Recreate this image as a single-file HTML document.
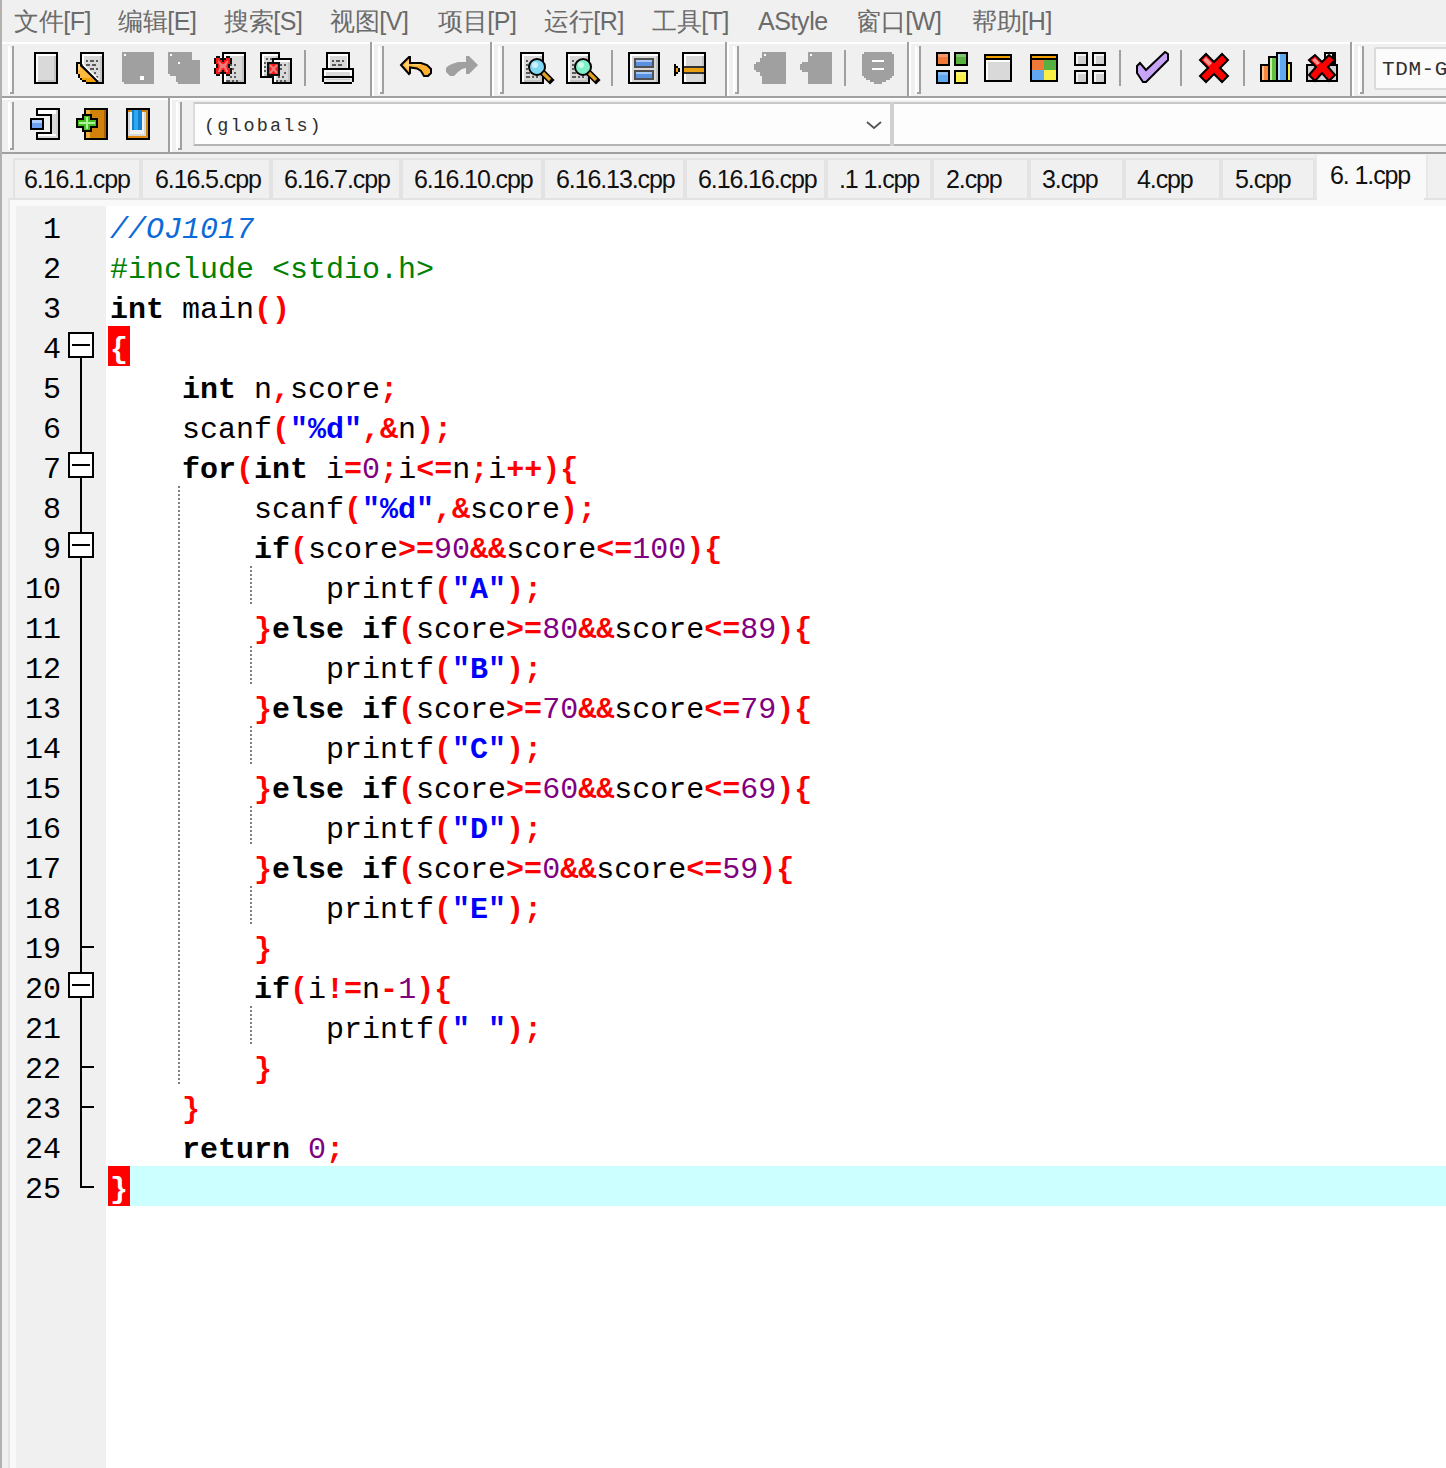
<!DOCTYPE html><html><head><meta charset="utf-8"><style>
*{margin:0;padding:0}
html,body{width:1446px;height:1468px;overflow:hidden;background:#f0f0f0;position:relative}
body{font-family:"Liberation Sans",sans-serif}
.menu{position:absolute;top:6px;font-size:25px;letter-spacing:-0.4px;line-height:30px;color:#6b6b6b;white-space:pre}
.courier{position:absolute;font-family:"Liberation Mono",monospace;font-size:21px;line-height:24px;color:#303030;white-space:pre}
.tab{position:absolute;font-size:25px;letter-spacing:-1.1px;line-height:30px;color:#111;white-space:pre}
.ln{position:absolute;left:16px;width:45px;text-align:right;font-family:"Liberation Mono",monospace;font-size:30px;line-height:40px;height:40px;color:#000;padding-top:4px;box-sizing:border-box}
.cl{position:absolute;left:110px;font-family:"Liberation Mono",monospace;font-size:30px;line-height:40px;height:40px;color:#000;white-space:pre;padding-top:4px;box-sizing:border-box}
.cl b{font-weight:bold}
.sy{color:#ff0000}
.nu{color:#800080}
.st{color:#0000ff}
.cm{color:#0a6ad8;font-style:italic}
.pp{color:#008000}
.wb{color:#fff}
</style></head><body><div style="position:absolute;left:0px;top:0px;width:2px;height:1468px;background:#b3b0ae;"></div><div class="menu" style="left:14px">文件[F]</div><div class="menu" style="left:118px">编辑[E]</div><div class="menu" style="left:224px">搜索[S]</div><div class="menu" style="left:330px">视图[V]</div><div class="menu" style="left:438px">项目[P]</div><div class="menu" style="left:544px">运行[R]</div><div class="menu" style="left:652px">工具[T]</div><div class="menu" style="left:758px">AStyle</div><div class="menu" style="left:856px">窗口[W]</div><div class="menu" style="left:972px">帮助[H]</div><div style="position:absolute;left:2px;top:42px;width:1444px;height:2px;background:#ffffff;"></div><div style="position:absolute;left:2px;top:96px;width:1444px;height:2px;background:#a0a0a0;"></div><div style="position:absolute;left:2px;top:98px;width:1444px;height:2px;background:#ffffff;"></div><div style="position:absolute;left:2px;top:152px;width:1444px;height:2px;background:#a0a0a0;"></div><div style="position:absolute;left:370px;top:42px;width:2px;height:54px;background:#a0a0a0;"></div><div style="position:absolute;left:372px;top:44px;width:2px;height:52px;background:#ffffff;"></div><div style="position:absolute;left:490px;top:42px;width:2px;height:54px;background:#a0a0a0;"></div><div style="position:absolute;left:492px;top:44px;width:2px;height:52px;background:#ffffff;"></div><div style="position:absolute;left:725px;top:42px;width:2px;height:54px;background:#a0a0a0;"></div><div style="position:absolute;left:727px;top:44px;width:2px;height:52px;background:#ffffff;"></div><div style="position:absolute;left:907px;top:42px;width:2px;height:54px;background:#a0a0a0;"></div><div style="position:absolute;left:909px;top:44px;width:2px;height:52px;background:#ffffff;"></div><div style="position:absolute;left:1350px;top:42px;width:2px;height:54px;background:#a0a0a0;"></div><div style="position:absolute;left:1352px;top:44px;width:2px;height:52px;background:#ffffff;"></div><div style="position:absolute;left:378px;top:46px;width:2px;height:48px;background:#ffffff;"></div><div style="position:absolute;left:380px;top:48px;width:2px;height:44px;background:#f8f8f8;"></div><div style="position:absolute;left:382px;top:46px;width:2px;height:48px;background:#a0a0a0;"></div><div style="position:absolute;left:380px;top:92px;width:2px;height:2px;background:#a0a0a0;"></div><div style="position:absolute;left:498px;top:46px;width:2px;height:48px;background:#ffffff;"></div><div style="position:absolute;left:500px;top:48px;width:2px;height:44px;background:#f8f8f8;"></div><div style="position:absolute;left:502px;top:46px;width:2px;height:48px;background:#a0a0a0;"></div><div style="position:absolute;left:500px;top:92px;width:2px;height:2px;background:#a0a0a0;"></div><div style="position:absolute;left:733px;top:46px;width:2px;height:48px;background:#ffffff;"></div><div style="position:absolute;left:735px;top:48px;width:2px;height:44px;background:#f8f8f8;"></div><div style="position:absolute;left:737px;top:46px;width:2px;height:48px;background:#a0a0a0;"></div><div style="position:absolute;left:735px;top:92px;width:2px;height:2px;background:#a0a0a0;"></div><div style="position:absolute;left:915px;top:46px;width:2px;height:48px;background:#ffffff;"></div><div style="position:absolute;left:917px;top:48px;width:2px;height:44px;background:#f8f8f8;"></div><div style="position:absolute;left:919px;top:46px;width:2px;height:48px;background:#a0a0a0;"></div><div style="position:absolute;left:917px;top:92px;width:2px;height:2px;background:#a0a0a0;"></div><div style="position:absolute;left:1358px;top:46px;width:2px;height:48px;background:#ffffff;"></div><div style="position:absolute;left:1360px;top:48px;width:2px;height:44px;background:#f8f8f8;"></div><div style="position:absolute;left:1362px;top:46px;width:2px;height:48px;background:#a0a0a0;"></div><div style="position:absolute;left:1360px;top:92px;width:2px;height:2px;background:#a0a0a0;"></div><div style="position:absolute;left:8px;top:46px;width:2px;height:48px;background:#ffffff;"></div><div style="position:absolute;left:10px;top:48px;width:2px;height:44px;background:#f8f8f8;"></div><div style="position:absolute;left:12px;top:46px;width:2px;height:48px;background:#a0a0a0;"></div><div style="position:absolute;left:10px;top:92px;width:2px;height:2px;background:#a0a0a0;"></div><div style="position:absolute;left:168px;top:98px;width:2px;height:54px;background:#a0a0a0;"></div><div style="position:absolute;left:170px;top:100px;width:2px;height:52px;background:#ffffff;"></div><div style="position:absolute;left:8px;top:102px;width:2px;height:48px;background:#ffffff;"></div><div style="position:absolute;left:10px;top:104px;width:2px;height:44px;background:#f8f8f8;"></div><div style="position:absolute;left:12px;top:102px;width:2px;height:48px;background:#a0a0a0;"></div><div style="position:absolute;left:10px;top:148px;width:2px;height:2px;background:#a0a0a0;"></div><div style="position:absolute;left:176px;top:102px;width:2px;height:48px;background:#ffffff;"></div><div style="position:absolute;left:178px;top:104px;width:2px;height:44px;background:#f8f8f8;"></div><div style="position:absolute;left:180px;top:102px;width:2px;height:48px;background:#a0a0a0;"></div><div style="position:absolute;left:178px;top:148px;width:2px;height:2px;background:#a0a0a0;"></div><div style="position:absolute;left:304px;top:50px;width:2px;height:36px;background:#a0a0a0;"></div><div style="position:absolute;left:611px;top:50px;width:2px;height:36px;background:#a0a0a0;"></div><div style="position:absolute;left:844px;top:50px;width:2px;height:36px;background:#a0a0a0;"></div><div style="position:absolute;left:1119px;top:50px;width:2px;height:36px;background:#a0a0a0;"></div><div style="position:absolute;left:1180px;top:50px;width:2px;height:36px;background:#a0a0a0;"></div><div style="position:absolute;left:1243px;top:50px;width:2px;height:36px;background:#a0a0a0;"></div><div style="position:absolute;left:1374px;top:47px;width:80px;height:43px;background:#fbfbfb;border:2px solid #dadada;border-radius:2px;box-sizing:border-box"></div><div class="courier" style="left:1382px;top:58px;font-size:21px;letter-spacing:0.6px">TDM-GCC</div><div style="position:absolute;left:193px;top:102px;width:699px;height:44px;background:#fdfdfd;border-top:2px solid #c8c8c8;border-bottom:2px solid #b4b4b4;border-left:2px solid #dcdcdc;box-sizing:border-box"></div><div style="position:absolute;left:890px;top:102px;width:4px;height:44px;background:#d0d0d0;"></div><div style="position:absolute;left:894px;top:102px;width:560px;height:44px;background:#fdfdfd;border-top:2px solid #c8c8c8;border-bottom:2px solid #b4b4b4;box-sizing:border-box"></div><div class="courier" style="left:204px;top:115px;font-size:18.5px;letter-spacing:2.1px">(globals)</div><svg style="position:absolute;left:864px;top:118px" width="20" height="14" viewBox="0 0 20 14"><path d="M3 4 L10 10 L17 4" fill="none" stroke="#555" stroke-width="1.8"/></svg><div style="position:absolute;left:2px;top:154px;width:1444px;height:46px;background:#f0f0f0;"></div><div style="position:absolute;left:13px;top:158px;width:128px;height:42px;background:#f0f0f0;border:2px solid #e3e3e3;box-sizing:border-box"></div><div class="tab" style="left:24px;top:164px">6.16.1.cpp</div><div style="position:absolute;left:141px;top:158px;width:130px;height:42px;background:#f0f0f0;border:2px solid #e3e3e3;box-sizing:border-box"></div><div class="tab" style="left:155px;top:164px">6.16.5.cpp</div><div style="position:absolute;left:271px;top:158px;width:130px;height:42px;background:#f0f0f0;border:2px solid #e3e3e3;box-sizing:border-box"></div><div class="tab" style="left:284px;top:164px">6.16.7.cpp</div><div style="position:absolute;left:401px;top:158px;width:142px;height:42px;background:#f0f0f0;border:2px solid #e3e3e3;box-sizing:border-box"></div><div class="tab" style="left:414px;top:164px">6.16.10.cpp</div><div style="position:absolute;left:543px;top:158px;width:142px;height:42px;background:#f0f0f0;border:2px solid #e3e3e3;box-sizing:border-box"></div><div class="tab" style="left:556px;top:164px">6.16.13.cpp</div><div style="position:absolute;left:685px;top:158px;width:141px;height:42px;background:#f0f0f0;border:2px solid #e3e3e3;box-sizing:border-box"></div><div class="tab" style="left:698px;top:164px">6.16.16.cpp</div><div style="position:absolute;left:826px;top:158px;width:106px;height:42px;background:#f0f0f0;border:2px solid #e3e3e3;box-sizing:border-box"></div><div class="tab" style="left:839px;top:164px">.1 1.cpp</div><div style="position:absolute;left:932px;top:158px;width:97px;height:42px;background:#f0f0f0;border:2px solid #e3e3e3;box-sizing:border-box"></div><div class="tab" style="left:946px;top:164px">2.cpp</div><div style="position:absolute;left:1029px;top:158px;width:95px;height:42px;background:#f0f0f0;border:2px solid #e3e3e3;box-sizing:border-box"></div><div class="tab" style="left:1042px;top:164px">3.cpp</div><div style="position:absolute;left:1124px;top:158px;width:97px;height:42px;background:#f0f0f0;border:2px solid #e3e3e3;box-sizing:border-box"></div><div class="tab" style="left:1137px;top:164px">4.cpp</div><div style="position:absolute;left:1221px;top:158px;width:94px;height:42px;background:#f0f0f0;border:2px solid #e3e3e3;box-sizing:border-box"></div><div class="tab" style="left:1235px;top:164px">5.cpp</div><div style="position:absolute;left:1315px;top:155px;width:113px;height:51px;background:#f9f9f9;border:2px solid #e8e8e8;border-bottom:none;border-top:none;box-sizing:border-box"></div><div class="tab" style="left:1330px;top:160px">6. 1.cpp</div><div style="position:absolute;left:8px;top:198px;width:1438px;height:1270px;background:#e3e3e3;"></div><div style="position:absolute;left:10px;top:200px;width:1436px;height:1268px;background:#f9f9f9;"></div><div style="position:absolute;left:1317px;top:198px;width:107px;height:8px;background:#f9f9f9;"></div><div style="position:absolute;left:16px;top:206px;width:90px;height:1262px;background:#f0f0f0;"></div><div style="position:absolute;left:106px;top:206px;width:1340px;height:1262px;background:#ffffff;"></div><div style="position:absolute;left:106px;top:1166px;width:1340px;height:40px;background:#ccffff;"></div><div style="position:absolute;left:108px;top:326px;width:22px;height:40px;background:#ff0000;"></div><div style="position:absolute;left:108px;top:1166px;width:22px;height:40px;background:#ff0000;"></div><div style="position:absolute;left:178px;top:486px;width:2px;height:600px;background:repeating-linear-gradient(#808080 0 2px, transparent 2px 4px)"></div><div style="position:absolute;left:250px;top:566px;width:2px;height:40px;background:repeating-linear-gradient(#808080 0 2px, transparent 2px 4px)"></div><div style="position:absolute;left:250px;top:646px;width:2px;height:40px;background:repeating-linear-gradient(#808080 0 2px, transparent 2px 4px)"></div><div style="position:absolute;left:250px;top:726px;width:2px;height:40px;background:repeating-linear-gradient(#808080 0 2px, transparent 2px 4px)"></div><div style="position:absolute;left:250px;top:806px;width:2px;height:40px;background:repeating-linear-gradient(#808080 0 2px, transparent 2px 4px)"></div><div style="position:absolute;left:250px;top:886px;width:2px;height:40px;background:repeating-linear-gradient(#808080 0 2px, transparent 2px 4px)"></div><div style="position:absolute;left:250px;top:1006px;width:2px;height:40px;background:repeating-linear-gradient(#808080 0 2px, transparent 2px 4px)"></div><div style="position:absolute;left:80px;top:358px;width:2px;height:830px;background:#000;"></div><div style="position:absolute;left:68px;top:332px;width:26px;height:26px;border:2px solid #000;background:#fff;box-sizing:border-box"></div><div style="position:absolute;left:72px;top:344px;width:18px;height:2px;background:#000;"></div><div style="position:absolute;left:68px;top:452px;width:26px;height:26px;border:2px solid #000;background:#fff;box-sizing:border-box"></div><div style="position:absolute;left:72px;top:464px;width:18px;height:2px;background:#000;"></div><div style="position:absolute;left:68px;top:532px;width:26px;height:26px;border:2px solid #000;background:#fff;box-sizing:border-box"></div><div style="position:absolute;left:72px;top:544px;width:18px;height:2px;background:#000;"></div><div style="position:absolute;left:68px;top:972px;width:26px;height:26px;border:2px solid #000;background:#fff;box-sizing:border-box"></div><div style="position:absolute;left:72px;top:984px;width:18px;height:2px;background:#000;"></div><div style="position:absolute;left:80px;top:946px;width:14px;height:2px;background:#000;"></div><div style="position:absolute;left:80px;top:1066px;width:14px;height:2px;background:#000;"></div><div style="position:absolute;left:80px;top:1106px;width:14px;height:2px;background:#000;"></div><div style="position:absolute;left:80px;top:1186px;width:14px;height:2px;background:#000;"></div><div class="ln" style="top:206px">1</div><div class="ln" style="top:246px">2</div><div class="ln" style="top:286px">3</div><div class="ln" style="top:326px">4</div><div class="ln" style="top:366px">5</div><div class="ln" style="top:406px">6</div><div class="ln" style="top:446px">7</div><div class="ln" style="top:486px">8</div><div class="ln" style="top:526px">9</div><div class="ln" style="top:566px">10</div><div class="ln" style="top:606px">11</div><div class="ln" style="top:646px">12</div><div class="ln" style="top:686px">13</div><div class="ln" style="top:726px">14</div><div class="ln" style="top:766px">15</div><div class="ln" style="top:806px">16</div><div class="ln" style="top:846px">17</div><div class="ln" style="top:886px">18</div><div class="ln" style="top:926px">19</div><div class="ln" style="top:966px">20</div><div class="ln" style="top:1006px">21</div><div class="ln" style="top:1046px">22</div><div class="ln" style="top:1086px">23</div><div class="ln" style="top:1126px">24</div><div class="ln" style="top:1166px">25</div><div class="cl" style="top:206px"><i class="cm">//OJ1017</i></div><div class="cl" style="top:246px"><span class="pp">#include &lt;stdio.h&gt;</span></div><div class="cl" style="top:286px"><b>int</b> main<b class="sy">()</b></div><div class="cl" style="top:326px"><b class="wb">{</b></div><div class="cl" style="top:366px">    <b>int</b> n<b class="sy">,</b>score<b class="sy">;</b></div><div class="cl" style="top:406px">    scanf<b class="sy">(</b><b class="st">&quot;%d&quot;</b><b class="sy">,&amp;</b>n<b class="sy">);</b></div><div class="cl" style="top:446px">    <b>for</b><b class="sy">(</b><b>int</b> i<b class="sy">=</b><span class="nu">0</span><b class="sy">;</b>i<b class="sy">&lt;=</b>n<b class="sy">;</b>i<b class="sy">++){</b></div><div class="cl" style="top:486px">        scanf<b class="sy">(</b><b class="st">&quot;%d&quot;</b><b class="sy">,&amp;</b>score<b class="sy">);</b></div><div class="cl" style="top:526px">        <b>if</b><b class="sy">(</b>score<b class="sy">&gt;=</b><span class="nu">90</span><b class="sy">&amp;&amp;</b>score<b class="sy">&lt;=</b><span class="nu">100</span><b class="sy">){</b></div><div class="cl" style="top:566px">            printf<b class="sy">(</b><b class="st">&quot;A&quot;</b><b class="sy">);</b></div><div class="cl" style="top:606px">        <b class="sy">}</b><b>else if</b><b class="sy">(</b>score<b class="sy">&gt;=</b><span class="nu">80</span><b class="sy">&amp;&amp;</b>score<b class="sy">&lt;=</b><span class="nu">89</span><b class="sy">){</b></div><div class="cl" style="top:646px">            printf<b class="sy">(</b><b class="st">&quot;B&quot;</b><b class="sy">);</b></div><div class="cl" style="top:686px">        <b class="sy">}</b><b>else if</b><b class="sy">(</b>score<b class="sy">&gt;=</b><span class="nu">70</span><b class="sy">&amp;&amp;</b>score<b class="sy">&lt;=</b><span class="nu">79</span><b class="sy">){</b></div><div class="cl" style="top:726px">            printf<b class="sy">(</b><b class="st">&quot;C&quot;</b><b class="sy">);</b></div><div class="cl" style="top:766px">        <b class="sy">}</b><b>else if</b><b class="sy">(</b>score<b class="sy">&gt;=</b><span class="nu">60</span><b class="sy">&amp;&amp;</b>score<b class="sy">&lt;=</b><span class="nu">69</span><b class="sy">){</b></div><div class="cl" style="top:806px">            printf<b class="sy">(</b><b class="st">&quot;D&quot;</b><b class="sy">);</b></div><div class="cl" style="top:846px">        <b class="sy">}</b><b>else if</b><b class="sy">(</b>score<b class="sy">&gt;=</b><span class="nu">0</span><b class="sy">&amp;&amp;</b>score<b class="sy">&lt;=</b><span class="nu">59</span><b class="sy">){</b></div><div class="cl" style="top:886px">            printf<b class="sy">(</b><b class="st">&quot;E&quot;</b><b class="sy">);</b></div><div class="cl" style="top:926px">        <b class="sy">}</b></div><div class="cl" style="top:966px">        <b>if</b><b class="sy">(</b>i<b class="sy">!=</b>n<b class="sy">-</b><span class="nu">1</span><b class="sy">){</b></div><div class="cl" style="top:1006px">            printf<b class="sy">(</b><b class="st">&quot; &quot;</b><b class="sy">);</b></div><div class="cl" style="top:1046px">        <b class="sy">}</b></div><div class="cl" style="top:1086px">    <b class="sy">}</b></div><div class="cl" style="top:1126px">    <b>return</b> <span class="nu">0</span><b class="sy">;</b></div><div class="cl" style="top:1166px"><b class="wb">}</b></div><svg style="position:absolute;left:0;top:0" width="1446" height="160" viewBox="0 0 1446 160"><rect x="34" y="52" width="24" height="32" fill="#000"/><rect x="36" y="54" width="20" height="28" fill="#fff"/><rect x="38" y="56" width="18" height="26" fill="#d9d9d9"/><rect x="54" y="56" width="2" height="26" fill="#c4c4c4"/><rect x="38" y="80" width="18" height="2" fill="#c4c4c4"/><rect x="80" y="52" width="24" height="32" fill="#000"/><rect x="82" y="54" width="20" height="28" fill="#fff"/><rect x="84" y="56" width="18" height="26" fill="#d9d9d9"/><rect x="100" y="56" width="2" height="26" fill="#c4c4c4"/><rect x="84" y="80" width="18" height="2" fill="#c4c4c4"/><rect x="86" y="60" width="2" height="2" fill="#5a5a5a"/><rect x="90" y="60" width="4" height="2" fill="#5a5a5a"/><rect x="96" y="60" width="2" height="2" fill="#5a5a5a"/><rect x="86" y="64" width="4" height="2" fill="#5a5a5a"/><rect x="92" y="64" width="4" height="2" fill="#5a5a5a"/><rect x="86" y="68" width="2" height="2" fill="#5a5a5a"/><rect x="90" y="68" width="4" height="2" fill="#5a5a5a"/><rect x="96" y="68" width="2" height="2" fill="#5a5a5a"/><rect x="90" y="72" width="2" height="2" fill="#5a5a5a"/><rect x="94" y="72" width="2" height="2" fill="#5a5a5a"/><rect x="96" y="76" width="2" height="2" fill="#5a5a5a"/><polygon points="76,62 80,62 80,64 82,64 98,80 98,84 86,84 86,82 82,82 82,80 80,80 80,78 78,78 78,74 76,74" fill="#f0f0f0"/><polygon points="76,62 80,62 80,64 82,64 98,80 98,84 86,84 86,82 82,82 82,80 80,80 80,78 78,78 78,74 76,74" fill="#000"/><rect x="80" y="80" width="2" height="4" fill="#f0f0f0"/><rect x="82" y="82" width="4" height="2" fill="#f0f0f0"/><rect x="78" y="78" width="2" height="6" fill="#f0f0f0"/><polygon points="78,64 80,64 80,66 96,81 96,82 86,82 86,80 82,80 82,78 80,78 80,74 78,74" fill="#ffb840"/><polygon points="78,64 80,64 80,70 78,70" fill="#ffd890"/><polygon points="82,78 92,78 96,81 96,82 86,82 86,80 82,80" fill="#f0a000"/><line x1="81" y1="65" x2="98" y2="82" stroke="#000" stroke-width="2"/><line x1="83" y1="64.5" x2="98.5" y2="80" stroke="#fff" stroke-width="1.5"/><polygon points="122,52 154,52 154,84 124,84 124,82 122,82" fill="#a0a0a0"/><rect x="124" y="54" width="2" height="2" fill="#fff"/><rect x="140" y="76" width="4" height="4" fill="#fff"/><polygon points="168,52 192,52 192,60 200,60 200,84 178,84 178,82 176,82 176,76 170,76 170,74 168,74" fill="#a0a0a0"/><rect x="170" y="54" width="2" height="2" fill="#fff"/><rect x="178" y="62" width="2" height="2" fill="#fff"/><rect x="222" y="52" width="24" height="32" fill="#000"/><rect x="224" y="54" width="20" height="28" fill="#fff"/><rect x="226" y="56" width="18" height="26" fill="#d9d9d9"/><rect x="242" y="56" width="2" height="26" fill="#c4c4c4"/><rect x="226" y="80" width="18" height="2" fill="#c4c4c4"/><rect x="228" y="64" width="4" height="2" fill="#5a5a5a"/><rect x="234" y="64" width="2" height="2" fill="#5a5a5a"/><rect x="230" y="68" width="4" height="2" fill="#5a5a5a"/><rect x="228" y="72" width="4" height="2" fill="#5a5a5a"/><rect x="234" y="72" width="2" height="2" fill="#5a5a5a"/><rect x="230" y="76" width="2" height="2" fill="#5a5a5a"/><rect x="234" y="76" width="2" height="2" fill="#5a5a5a"/><rect x="226" y="80" width="4" height="2" fill="#5a5a5a"/><rect x="232" y="80" width="2" height="2" fill="#5a5a5a"/><rect x="236" y="80" width="2" height="2" fill="#5a5a5a"/><polygon points="216,56 220,56 220,58 222,58 222,60 224,60 224,58 226,58 226,56 230,56 230,58 232,58 232,64 230,64 230,68 232,68 232,74 230,74 230,76 226,76 226,74 224,74 224,72 222,72 222,74 220,74 220,76 216,76 216,74 214,74 214,68 216,68 216,64 214,64 214,58 216,58" fill="#101010"/><polygon points="216,58 220,58 220,60 222,60 222,62 224,62 224,60 226,60 226,58 230,58 230,64 228,64 228,68 230,68 230,74 226,74 226,72 224,72 224,70 222,70 222,72 220,72 220,74 216,74 216,68 218,68 218,64 216,64" fill="#ff1818"/><polygon points="218,60 220,62 222,64 224,64 226,62 228,60 228,62 226,66 228,72 226,72 224,68 222,68 220,72 218,72 220,66 218,62" fill="#f27a7a"/><rect x="260" y="52" width="20" height="26" fill="#000"/><rect x="262" y="54" width="16" height="22" fill="#fff"/><rect x="264" y="56" width="14" height="20" fill="#d9d9d9"/><rect x="276" y="56" width="2" height="20" fill="#c4c4c4"/><rect x="264" y="74" width="14" height="2" fill="#c4c4c4"/><rect x="266" y="58" width="2" height="2" fill="#5a5a5a"/><rect x="270" y="58" width="2" height="2" fill="#5a5a5a"/><rect x="264" y="62" width="2" height="2" fill="#5a5a5a"/><rect x="264" y="66" width="2" height="2" fill="#5a5a5a"/><rect x="264" y="70" width="2" height="2" fill="#5a5a5a"/><rect x="272" y="58" width="20" height="26" fill="#000"/><rect x="274" y="60" width="16" height="22" fill="#fff"/><rect x="276" y="62" width="14" height="20" fill="#d9d9d9"/><rect x="288" y="62" width="2" height="20" fill="#c4c4c4"/><rect x="276" y="80" width="14" height="2" fill="#c4c4c4"/><rect x="278" y="64" width="4" height="2" fill="#5a5a5a"/><rect x="284" y="64" width="2" height="2" fill="#5a5a5a"/><rect x="278" y="68" width="4" height="2" fill="#5a5a5a"/><rect x="276" y="72" width="4" height="2" fill="#5a5a5a"/><rect x="284" y="72" width="2" height="2" fill="#5a5a5a"/><rect x="278" y="76" width="2" height="2" fill="#5a5a5a"/><rect x="282" y="76" width="2" height="2" fill="#5a5a5a"/><rect x="276" y="80" width="2" height="2" fill="#5a5a5a"/><rect x="280" y="80" width="2" height="2" fill="#5a5a5a"/><rect x="284" y="80" width="2" height="2" fill="#5a5a5a"/><rect x="267" y="62" width="13" height="14" fill="#101010"/><rect x="269" y="64" width="9" height="10" fill="#ff1818"/><path d="M270 65 L277 73 M277 65 L270 73" stroke="#f27a7a" stroke-width="2.2"/><rect x="272" y="60" width="2" height="4" fill="#101010"/><rect x="272" y="74" width="2" height="4" fill="#101010"/><rect x="326" y="52" width="24" height="18" fill="#000"/><rect x="328" y="54" width="20" height="16" fill="#fff"/><rect x="330" y="56" width="17" height="12" fill="#d9d9d9"/><rect x="332" y="60" width="2" height="2" fill="#5a5a5a"/><rect x="336" y="60" width="4" height="2" fill="#5a5a5a"/><rect x="342" y="60" width="2" height="2" fill="#5a5a5a"/><rect x="332" y="64" width="4" height="2" fill="#5a5a5a"/><rect x="338" y="64" width="4" height="2" fill="#5a5a5a"/><rect x="322" y="68" width="32" height="16" fill="#000"/><rect x="324" y="70" width="28" height="6" fill="#fff"/><rect x="326" y="72" width="24" height="4" fill="#d9d9d9"/><rect x="324" y="78" width="28" height="4" fill="#e8e8e8"/><rect x="326" y="79" width="24" height="1" fill="#c8c8c8"/><rect x="322" y="82" width="2" height="0" fill="#000"/><rect x="324" y="82" width="28" height="2" fill="#000"/><rect x="322" y="82" width="2" height="2" fill="#f0f0f0"/><rect x="352" y="82" width="2" height="2" fill="#f0f0f0"/><polygon points="401,65 409,57 410,57 410,63 421,63 427,65 431,69 431,73 428,76 424,76 421,71 417,68.5 410,67.5 410,73 409,74" fill="#ffb030" stroke="#000" stroke-width="2" stroke-linejoin="miter"/><polygon points="404,65 409,60 409,70" fill="#ffd070"/><rect x="412" y="64" width="8" height="1.5" fill="#ffd070"/><polygon points="478,65 469,56 466,56 466,62 458,62 452,64 448,66 446,68 446,72 450,76 454,76 458,72 462,69 466,68 466,74 469,74" fill="#a0a0a0"/><rect x="520" y="52" width="24" height="32" fill="#000"/><rect x="522" y="54" width="20" height="28" fill="#fff"/><rect x="524" y="56" width="18" height="26" fill="#d9d9d9"/><rect x="540" y="56" width="2" height="26" fill="#c4c4c4"/><rect x="524" y="80" width="18" height="2" fill="#c4c4c4"/><rect x="526" y="76" width="4" height="2" fill="#5a5a5a"/><rect x="532" y="76" width="2" height="2" fill="#5a5a5a"/><rect x="536" y="76" width="2" height="2" fill="#5a5a5a"/><rect x="526" y="72" width="4" height="2" fill="#5a5a5a"/><rect x="526" y="60" width="2" height="2" fill="#5a5a5a"/><rect x="526" y="64" width="2" height="2" fill="#5a5a5a"/><rect x="526" y="68" width="2" height="2" fill="#5a5a5a"/><circle cx="537" cy="67" r="9" fill="#000"/><circle cx="537" cy="67" r="7" fill="#80d8f4"/><circle cx="535" cy="65" r="3" fill="#fff" opacity="0.6"/><line x1="544" y1="74" x2="550" y2="80" stroke="#000" stroke-width="6.5" stroke-linecap="square"/><line x1="543" y1="73" x2="550" y2="80" stroke="#e0a020" stroke-width="3.2"/><rect x="566" y="52" width="24" height="32" fill="#000"/><rect x="568" y="54" width="20" height="28" fill="#fff"/><rect x="570" y="56" width="18" height="26" fill="#d9d9d9"/><rect x="586" y="56" width="2" height="26" fill="#c4c4c4"/><rect x="570" y="80" width="18" height="2" fill="#c4c4c4"/><rect x="572" y="76" width="4" height="2" fill="#5a5a5a"/><rect x="578" y="76" width="2" height="2" fill="#5a5a5a"/><rect x="582" y="76" width="2" height="2" fill="#5a5a5a"/><rect x="572" y="72" width="4" height="2" fill="#5a5a5a"/><rect x="572" y="60" width="2" height="2" fill="#5a5a5a"/><rect x="572" y="64" width="2" height="2" fill="#5a5a5a"/><rect x="572" y="68" width="2" height="2" fill="#5a5a5a"/><circle cx="583" cy="67" r="9" fill="#000"/><circle cx="583" cy="67" r="7" fill="#80f0c8"/><circle cx="581" cy="65" r="3" fill="#fff" opacity="0.6"/><line x1="590" y1="74" x2="596" y2="80" stroke="#000" stroke-width="6.5" stroke-linecap="square"/><line x1="589" y1="73" x2="596" y2="80" stroke="#e0a020" stroke-width="3.2"/><rect x="628" y="52" width="32" height="32" fill="#000"/><rect x="630" y="54" width="28" height="28" fill="#fff"/><rect x="632" y="56" width="26" height="26" fill="#d9d9d9"/><rect x="656" y="56" width="2" height="26" fill="#c4c4c4"/><rect x="634" y="58" width="20" height="10" fill="#505050"/><rect x="636" y="60" width="16" height="6" fill="#5a90e0"/><rect x="636" y="60" width="16" height="2" fill="#a8c8f8"/><rect x="634" y="70" width="20" height="10" fill="#505050"/><rect x="636" y="72" width="16" height="6" fill="#5a90e0"/><rect x="636" y="72" width="16" height="2" fill="#a8c8f8"/><rect x="682" y="52" width="24" height="32" fill="#000"/><rect x="684" y="54" width="20" height="28" fill="#fff"/><rect x="686" y="56" width="18" height="26" fill="#d9d9d9"/><rect x="702" y="56" width="2" height="26" fill="#c4c4c4"/><rect x="684" y="66" width="20" height="2" fill="#333"/><rect x="684" y="68" width="20" height="4" fill="#e8a010"/><rect x="684" y="72" width="20" height="2" fill="#333"/><polygon points="674,64 676,64 676,66 678,66 678,68 680,68 680,72 678,72 678,74 676,74 676,76 674,76" fill="#000"/><rect x="676" y="68" width="2" height="4" fill="#f0a010"/><polygon points="762,52 786,52 786,84 762,84 762,76 760,76 760,72 756,72 756,70 754,70 754,64 756,64 756,62 760,62 760,58 762,58" fill="#a0a0a0"/><rect x="764" y="54" width="2" height="2" fill="#fff"/><polygon points="808,52 832,52 832,84 808,84 808,72 802,72 802,70 800,70 800,64 802,64 802,62 808,62" fill="#a0a0a0"/><rect x="810" y="54" width="2" height="2" fill="#fff"/><polygon points="864,52 892,52 892,54 894,54 894,76 892,76 892,78 890,78 890,80 886,80 886,82 882,82 882,84 874,84 874,82 870,82 870,80 866,80 866,78 864,78 864,76 862,76 862,54 864,54" fill="#a0a0a0"/><rect x="872" y="60" width="12" height="2" fill="#fff"/><rect x="872" y="68" width="12" height="2" fill="#fff"/><rect x="936" y="52" width="14" height="14" fill="#000"/><rect x="938" y="54" width="10" height="10" fill="#f07838"/><rect x="938" y="54" width="10" height="3" fill="#ffffff40"/><rect x="954" y="52" width="14" height="14" fill="#000"/><rect x="956" y="54" width="10" height="10" fill="#58b040"/><rect x="956" y="54" width="10" height="3" fill="#ffffff40"/><rect x="936" y="70" width="14" height="14" fill="#000"/><rect x="938" y="72" width="10" height="10" fill="#60a8f0"/><rect x="938" y="72" width="10" height="3" fill="#ffffff40"/><rect x="954" y="70" width="14" height="14" fill="#000"/><rect x="956" y="72" width="10" height="10" fill="#f8f048"/><rect x="956" y="72" width="10" height="3" fill="#ffffff40"/><rect x="984" y="54" width="28" height="28" fill="#000"/><rect x="986" y="56" width="24" height="2" fill="#f0a000"/><rect x="986" y="60" width="24" height="20" fill="#fff"/><rect x="988" y="62" width="22" height="18" fill="#d9d9d9"/><rect x="1030" y="54" width="28" height="28" fill="#000"/><rect x="1032" y="56" width="24" height="2" fill="#f0a000"/><rect x="1032" y="60" width="12" height="10" fill="#f07838"/><rect x="1044" y="60" width="12" height="10" fill="#58b040"/><rect x="1032" y="70" width="12" height="10" fill="#60a8f0"/><rect x="1044" y="70" width="12" height="10" fill="#f8f048"/><rect x="1074" y="52" width="14" height="14" fill="#000"/><rect x="1076" y="54" width="10" height="10" fill="#f4f4f4"/><rect x="1078" y="56" width="8" height="8" fill="#d0d0d0"/><rect x="1092" y="52" width="14" height="14" fill="#000"/><rect x="1094" y="54" width="10" height="10" fill="#f4f4f4"/><rect x="1096" y="56" width="8" height="8" fill="#d0d0d0"/><rect x="1074" y="70" width="14" height="14" fill="#000"/><rect x="1076" y="72" width="10" height="10" fill="#f4f4f4"/><rect x="1078" y="74" width="8" height="8" fill="#d0d0d0"/><rect x="1092" y="70" width="14" height="14" fill="#000"/><rect x="1094" y="72" width="10" height="10" fill="#f4f4f4"/><rect x="1096" y="74" width="8" height="8" fill="#d0d0d0"/><polygon points="1137,66 1140,63 1146,70 1165,52 1168,54 1168,60 1146,82 1143,82 1137,73" fill="#c8a4f8" stroke="#000" stroke-width="2" stroke-linejoin="miter"/><polygon points="1200,60 1206,54 1214,62 1222,54 1228,60 1220,68 1228,76 1222,82 1214,74 1206,82 1200,76 1208,68" fill="#ff0000" stroke="#000" stroke-width="2" stroke-linejoin="miter"/><polygon points="1203,60 1206,57 1212,63 1209,66" fill="#ff9090"/><rect x="1260" y="64" width="10" height="18" fill="#000"/><rect x="1262" y="66" width="6" height="14" fill="#f88840"/><rect x="1262" y="66" width="2" height="14" fill="#ffc090"/><rect x="1268" y="56" width="10" height="26" fill="#000"/><rect x="1270" y="58" width="6" height="22" fill="#60c040"/><rect x="1270" y="58" width="2" height="22" fill="#c8f0a0"/><rect x="1276" y="52" width="12" height="30" fill="#000"/><rect x="1278" y="54" width="8" height="26" fill="#60a8f0"/><rect x="1278" y="54" width="2" height="26" fill="#c0e0ff"/><rect x="1286" y="62" width="6" height="20" fill="#000"/><rect x="1288" y="64" width="2" height="16" fill="#f8f040"/><rect x="1306" y="64" width="32" height="18" fill="#000"/><rect x="1308" y="66" width="28" height="14" fill="#d0d0d0"/><rect x="1324" y="52" width="12" height="14" fill="#000"/><rect x="1326" y="54" width="6" height="6" fill="#e8e8e8"/><polygon points="1309,60 1315,55 1322,62 1329,55 1335,60 1328,67 1335,75 1329,81 1322,73 1315,81 1309,75 1316,67" fill="#ff0000" stroke="#000" stroke-width="2" stroke-linejoin="miter"/><polygon points="1312,60 1315,58 1320,63 1317,65" fill="#ff9090"/><polygon points="36,108 60,108 60,140 36,140 36,132 50,132 50,116 36,116" fill="#000"/><rect x="38" y="110" width="20" height="4" fill="#fff"/><rect x="38" y="134" width="20" height="4" fill="#fff"/><rect x="52" y="114" width="4" height="20" fill="#d9d9d9"/><rect x="56" y="110" width="2" height="28" fill="#d0d0d0"/><rect x="38" y="136" width="20" height="2" fill="#d8d8d8"/><rect x="30" y="118" width="14" height="12" fill="#000"/><rect x="32" y="120" width="10" height="8" fill="#70a0f0"/><rect x="32" y="120" width="10" height="3" fill="#b0d0ff"/><rect x="84" y="108" width="24" height="32" fill="#000"/><rect x="86" y="110" width="20" height="28" fill="#d0820c"/><rect x="86" y="110" width="4" height="28" fill="#f0b040"/><rect x="104" y="110" width="2" height="28" fill="#a86008"/><polygon points="83,115 91,115 91,119 97,119 97,127 91,127 91,131 83,131 83,127 77,127 77,119 83,119" fill="#44c020" stroke="#000" stroke-width="2" stroke-linejoin="miter"/><rect x="86" y="117" width="2" height="12" fill="#b0f4a0"/><rect x="79" y="122" width="16" height="2" fill="#b0f4a0"/><rect x="126" y="108" width="24" height="32" fill="#000"/><rect x="128" y="110" width="20" height="28" fill="#d0820c"/><rect x="128" y="112" width="18" height="24" fill="#d8d8d8"/><rect x="130" y="112" width="14" height="22" fill="#f0f0f0"/><rect x="132" y="110" width="10" height="20" fill="#1080d0"/><rect x="134" y="110" width="4" height="20" fill="#30a8f0"/><rect x="128" y="136" width="20" height="2" fill="#e08a10"/></svg></body></html>
